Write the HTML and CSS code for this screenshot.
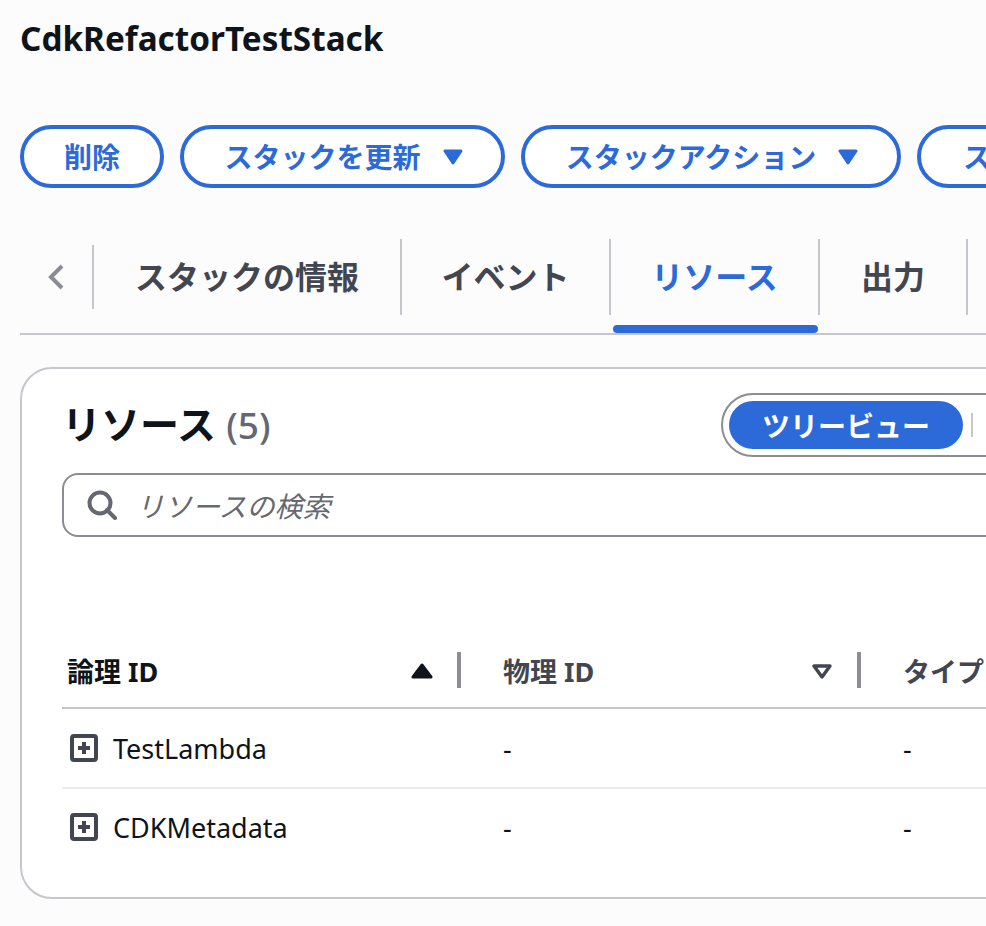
FILE: index.html
```html
<!DOCTYPE html>
<html lang="ja">
<head>
<meta charset="utf-8">
<title>CdkRefactorTestStack</title>
<link rel="stylesheet" href="styles.css">
</head>
<body>
<main class="page">
  <h1 class="title">CdkRefactorTestStack</h1>
  <div class="actions">
    <button class="btn btn-del">削除</button>
    <button class="btn btn-update">スタックを更新<svg class="caret" viewBox="0 0 22 16"><path d="M3 2h16L11 14z" fill="currentColor" stroke="currentColor" stroke-width="3" stroke-linejoin="round"/></svg></button>
    <button class="btn btn-action">スタックアクション<svg class="caret" viewBox="0 0 22 16"><path d="M3 2h16L11 14z" fill="currentColor" stroke="currentColor" stroke-width="3" stroke-linejoin="round"/></svg></button>
    <button class="btn btn-more">スタックの作成</button>
  </div>
  <nav class="tabs">
    <div class="tab-prev"><svg class="chev" viewBox="0 0 18 28"><path d="M15 3L4 14l11 11" fill="none" stroke="#8c8c94" stroke-width="4"/></svg></div>
    <div class="tab t1">スタックの情報</div>
    <div class="tab t2">イベント</div>
    <div class="tab t3 active">リソース</div>
    <div class="tab t4">出力</div>
  </nav>
  <section class="card">
    <div class="card-head">
      <h2 class="card-title">リソース <span class="count">(5)</span></h2>
      <div class="toggle">
        <div class="toggle-on">ツリービュー</div>
        <div class="toggle-sep"></div>
      </div>
    </div>
    <div class="search">
      <svg class="search-icon" viewBox="0 0 32 32"><circle cx="14" cy="14" r="10.5" fill="none" stroke="#656871" stroke-width="4"/><path d="M21 21l8 8" stroke="#656871" stroke-width="4" stroke-linecap="round"/></svg>
      <span class="placeholder">リソースの検索</span>
    </div>
    <div class="table">
      <div class="row head">
        <div class="th dark">論理 ID<svg class="sort" viewBox="0 0 22 16"><path d="M11 2L20 14H2z" fill="#0f141a" stroke="#0f141a" stroke-width="3" stroke-linejoin="round"/></svg><i class="th-sep"></i></div>
        <div class="th">物理 ID<svg class="sort" viewBox="0 0 22 16"><path d="M3 3h16l-8 11z" fill="none" stroke="#424650" stroke-width="3.4" stroke-linejoin="round"/></svg><i class="th-sep"></i></div>
        <div class="th">タイプ</div>
      </div>
      <div class="row body">
        <div class="td"><svg class="plus" viewBox="0 0 28 28"><rect x="2" y="2" width="24" height="24" rx="2" fill="none" stroke="#424650" stroke-width="4"/><path d="M14 8v12M8 14h12" stroke="#424650" stroke-width="4"/></svg>TestLambda</div>
        <div class="td">-</div>
        <div class="td">-</div>
      </div>
      <div class="row body">
        <div class="td"><svg class="plus" viewBox="0 0 28 28"><rect x="2" y="2" width="24" height="24" rx="2" fill="none" stroke="#424650" stroke-width="4"/><path d="M14 8v12M8 14h12" stroke="#424650" stroke-width="4"/></svg>CDKMetadata</div>
        <div class="td">-</div>
        <div class="td">-</div>
      </div>
    </div>
  </section>
</main>
</body>
</html>
```
FILE: styles.css
```css
* { box-sizing: border-box; }
html, body { margin: 0; height: 100%; overflow: hidden; }
body {
  background: #fcfcfd;
  color: #0f141a;
  font-family: "Noto Sans", "Noto Sans CJK JP", sans-serif;
}
.page { width: 1400px; padding: 17px 0 0 20px; }
.title { margin: 0; font-size: 33.3px; line-height: 42px; font-weight: 700; }
.actions { display: flex; gap: 16px; margin-top: 66px; }
.btn {
  height: 63px;
  border: 4px solid #2c6ada;
  border-radius: 32px;
  background: #fff;
  color: #2c6ada;
  font: 700 28px/1 "Noto Sans", "Noto Sans CJK JP", sans-serif;
  display: flex;
  align-items: center;
  justify-content: center;
  padding: 0;
  white-space: nowrap;
}
.btn-del { width: 144px; }
.btn-update { width: 325px; padding-left: 3px; }
.btn-action { width: 380px; padding-left: 3px; }
.btn-more { width: 340px; justify-content: flex-start; padding-left: 42px; }
.caret { width: 22px; height: 16px; margin-left: 21px; }
.tabs {
  display: flex;
  align-items: center;
  height: 96px;
  margin-top: 51px;
  border-bottom: 2px solid #c6c6cd;
  padding-bottom: 18px;
  width: 1400px;
}
.tab-prev {
  width: 74px;
  height: 64px;
  display: flex;
  align-items: center;
  justify-content: center;
  border-right: 2px solid #c6c6cd;
}
.chev { width: 18px; height: 28px; }
.tab {
  position: relative;
  height: 76px;
  display: flex;
  align-items: center;
  justify-content: center;
  padding-bottom: 4px;
  font-size: 32px;
  font-weight: 700;
  color: #424650;
  border-right: 2px solid #c6c6cd;
  white-space: nowrap;
}
.t1 { width: 308px; }
.t2 { width: 209px; }
.t3 { width: 209px; }
.t4 { width: 148px; }
.active { color: #2c6ada; }
.active::after {
  content: "";
  position: absolute;
  left: 2px;
  right: 0;
  bottom: -18px;
  height: 8px;
  background: #2c6ada;
  border-radius: 4px;
}
.card {
  width: 1300px;
  height: 532px;
  margin-top: 32px;
  background: #fff;
  border: 2px solid #c6c6cd;
  border-radius: 32px;
  padding: 24px 40px 0;
}
.card-head { height: 58px; display: flex; justify-content: space-between; align-items: flex-start; }
.card-title { margin: 0; padding-top: 6px; font-size: 39px; line-height: 50px; font-weight: 700; }
.count { font-size: 37px; font-weight: 500; color: #656871; }
.toggle {
  position: absolute;
  left: 721px;
  top: 393px;
  width: 400px;
  height: 64px;
  border: 2px solid #8c8c94;
  border-radius: 32px;
  display: flex;
  align-items: center;
  padding-left: 6px;
}
.toggle-on {
  width: 234px;
  height: 48px;
  border-radius: 24px;
  background: #2c6ada;
  color: #fff;
  font-size: 28px;
  font-weight: 700;
  display: flex;
  align-items: center;
  justify-content: center;
}
.toggle-sep { width: 2px; height: 24px; margin-left: 8px; background: #c6c6cd; }
.search {
  margin-top: 22px;
  height: 64px;
  width: 1200px;
  border: 2px solid #8c8c94;
  border-radius: 16px;
  display: flex;
  align-items: center;
  padding-left: 22px;
}
.search-icon { width: 32px; height: 32px; }
.placeholder { margin-left: 18px; font-size: 28px; font-style: italic; color: #656871; }
.table { width: 1200px; margin-top: 114px; }
.row { display: grid; grid-template-columns: 399px 400px 1fr; }
.head { height: 58px; border-bottom: 2px solid #c6c6cd; padding-bottom: 19px; }
.body { height: 80px; align-items: center; border-bottom: 2px solid #e9ebed; }
.body:last-child { height: 78px; border-bottom-color: transparent; }
.th {
  position: relative;
  display: flex;
  align-items: center;
  padding-left: 42px;
  font-size: 27px;
  font-weight: 700;
  color: #424650;
}
.row .th:first-child { padding-left: 5px; }
.dark { color: #0f141a; }
.sort { position: absolute; right: 28px; width: 22px; height: 16px; }
.th-sep { position: absolute; right: 0; top: 1px; width: 4px; height: 36px; background: #8c8c94; }
.td { padding-left: 42px; font-size: 27px; display: flex; align-items: center; }
.row .td:first-child { padding-left: 8px; }
.plus { width: 28px; height: 28px; margin-right: 15px; }
```
